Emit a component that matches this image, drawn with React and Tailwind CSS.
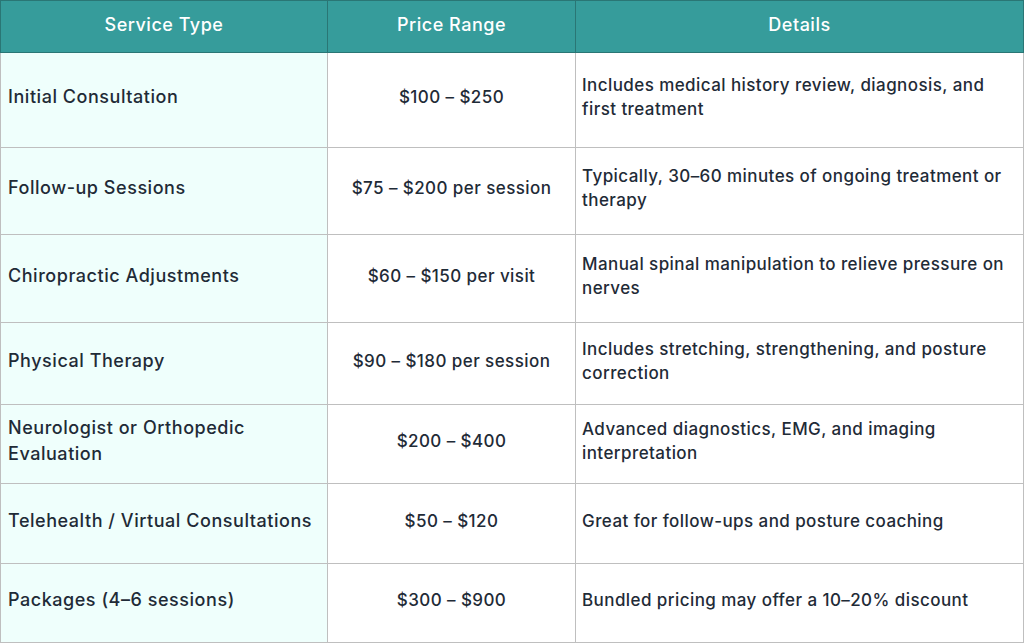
import React from "react";

const rows = [
  ["Initial Consultation", "$100 – $250", "Includes medical history review, diagnosis, and first treatment", "h-[95px]"],
  ["Follow-up Sessions", "$75 – $200 per session", "Typically, 30–60 minutes of ongoing treatment or therapy", "h-[87px]"],
  ["Chiropractic Adjustments", "$60 – $150 per visit", "Manual spinal manipulation to relieve pressure on nerves", "h-[88px]"],
  ["Physical Therapy", "$90 – $180 per session", "Includes stretching, strengthening, and posture correction", "h-[82px]"],
  ["Neurologist or Orthopedic Evaluation", "$200 – $400", "Advanced diagnostics, EMG, and imaging interpretation", "h-[79px]"],
  ["Telehealth / Virtual Consultations", "$50 – $120", "Great for follow-ups and posture coaching", "h-[80px]"],
  ["Packages (4–6 sessions)", "$300 – $900", "Bundled pricing may offer a 10–20% discount", "h-[79px]"],
];

export default function App() {
  return (
    <div className="w-[1024px] h-[643px] bg-white" style={{ fontFamily: "Inter, 'Noto Sans', sans-serif" }}>
      <table className="w-[1023px] border-collapse table-fixed text-[17px] font-medium text-[#1f2b37] leading-6 tracking-[0.025em]">
        <colgroup>
          <col className="w-[327px]" />
          <col className="w-[248px]" />
          <col className="w-[448px]" />
        </colgroup>
        <thead>
          <tr className="h-[52px] bg-[#369c9b] text-white tracking-[0.03em]">
            <th className="border border-[#2a7675] font-medium text-[18px] pb-1">Service Type</th>
            <th className="border border-[#2a7675] font-medium text-[18px] pb-1">Price Range</th>
            <th className="border border-[#2a7675] font-medium text-[18px] pb-1">Details</th>
          </tr>
        </thead>
        <tbody>
          {rows.map(([service, price, details, h]) => (
            <tr key={service} className={h}>
              <td className="border border-[#bfbfbf] bg-[#effffc] px-[7px] pb-[6px] text-[18px] leading-[26px] tracking-[0.03em]">{service}</td>
              <td className="border border-[#bfbfbf] text-center px-2 pb-[6px]">{price}</td>
              <td className="border border-[#bfbfbf] pl-[6px] pr-3 pb-[6px]">{details}</td>
            </tr>
          ))}
        </tbody>
      </table>
    </div>
  );
}
